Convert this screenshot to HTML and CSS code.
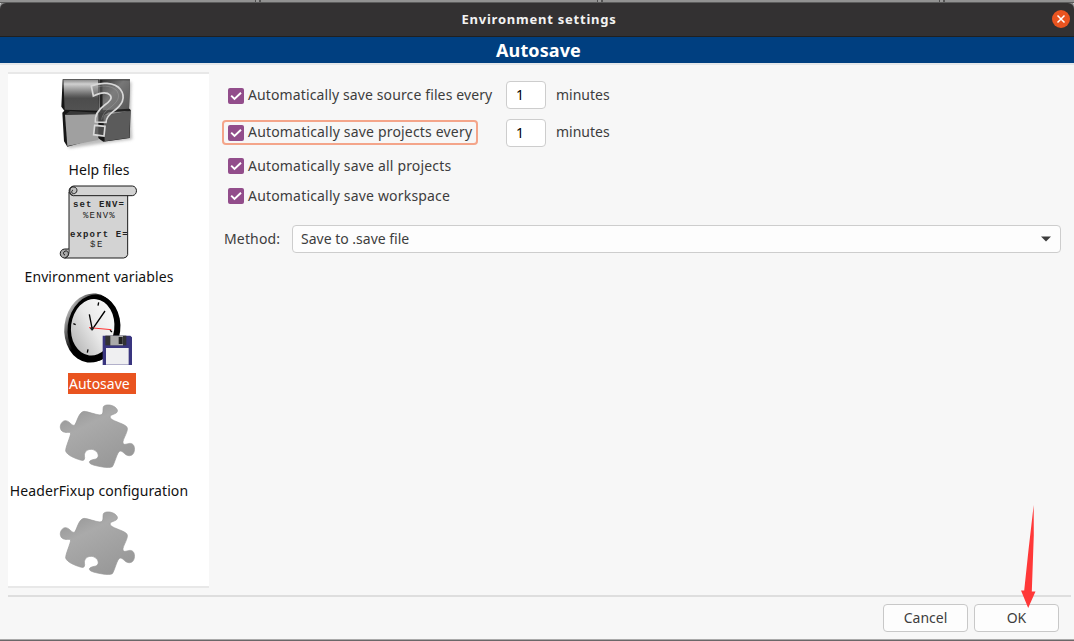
FILE: index.html
```html
<!DOCTYPE html>
<html lang="en">
<head>
<meta charset="utf-8">
<title>Environment settings</title>
<link rel="stylesheet" href="styles.css">
</head>
<body>
<svg class="defs" width="0" height="0" aria-hidden="true">
  <defs>
    <linearGradient id="puzzle-fill" x1="0" y1="0" x2="0.6" y2="1"><stop offset="0" stop-color="#8f8f8f"/><stop offset="0.4" stop-color="#aaa"/><stop offset="1" stop-color="#999"/></linearGradient>
    <symbol id="puzzle" viewBox="27 -11 240 255">
      <path d="M102 38C113 38 135 48 150 49C164 48 156 31 161 23C170 14 197 20 202 34C205 48 181 45 180 55C180 66 219 73 230 84C239 94 217 121 219 133C222 143 234 131 245 135C257 139 256 165 244 170C226 176 221 156 210 157C202 158 194 195 187 204C180 210 135 203 121 195C112 187 126 183 138 181C151 175 144 155 126 152C106 151 101 165 104 177C103 185 101 187 91 184C75 179 51 170 47 157C46 146 62 113 62 103C59 98 45 105 37 98C25 89 32 68 45 66C58 65 64 82 73 80C80 75 85 40 102 38Z" fill="url(#puzzle-fill)" stroke="#999" stroke-width="2"/>
    </symbol>
    <symbol id="tick" viewBox="0 0 16 16"><path d="M3.2 7.6L6.5 11L13 4.7" fill="none" stroke="#fff" stroke-width="1.9"/></symbol>
  </defs>
</svg>
<div class="window">
  <div class="backdrop-top"></div>
  <header class="titlebar">
    <h1 class="title">Environment settings</h1>
    <button class="close" aria-label="Close"><svg width="10" height="10" viewBox="0 0 10 10"><path d="M1.5 1.5L8.5 8.5M8.5 1.5L1.5 8.5" stroke="#fff" stroke-width="1.5"/></svg></button>
  </header>
  <div class="banner"><h2 class="banner-text">Autosave</h2></div>
  <main class="content">
    <nav class="sidebar">
      <div class="item">
        <svg class="icon" viewBox="27 12 240 255">
          <defs>
            <linearGradient id="box-a" x1="0" y1="0" x2="0" y2="1"><stop offset="0" stop-color="#8a8a8a"/><stop offset="0.14" stop-color="#d0d0d0"/><stop offset="0.5" stop-color="#646464"/><stop offset="0.6" stop-color="#4c4c4c"/><stop offset="1" stop-color="#525252"/></linearGradient>
            <linearGradient id="box-b" x1="0" y1="0" x2="1" y2="1"><stop offset="0" stop-color="#333"/><stop offset="0.4" stop-color="#777"/><stop offset="1" stop-color="#555"/></linearGradient>
            <filter id="soft" x="-20%" y="-20%" width="140%" height="140%"><feGaussianBlur stdDeviation="4"/></filter>
          </defs>
          <path d="M42 36L244 36L242 124L247 208L170 218L56 235Z" fill="#999" opacity="0.65" filter="url(#soft)"/>
          <path d="M38 28L148 28V116L150 128L238 116L242 120L239 204L160 215L144 204L52 230L42 214L37 128L43 122L34 110Z" fill="#161616"/>
          <path d="M148 28H240L237 116L242 122L150 130Z" fill="#222"/>
          <path d="M40 29L145 29L147 122L44 119Z" fill="url(#box-a)"/>
          <path d="M157 30L240 31L237 116L158 121Z" fill="url(#box-b)"/>
          <path d="M45 134L145 131L145 210L52 228Z" fill="#a0a0a0"/>
          <path d="M45 134L60 123L147 128L145 133Z" fill="#383838"/>
          <path d="M160 137L241 123L238 203L164 214Z" fill="#5b5b5b"/>
          <path d="M160 137L176 127L241 123Z" fill="#858585"/>
          <path d="M124 48C150 36 195 36 211 58C230 84 215 106 190 124C176 134 169 142 168 157L136 156C134 134 145 119 164 105C181 93 188 84 180 75C169 64 149 69 130 78Z" fill="#888" fill-opacity="0.4" stroke="#d8d8d8" stroke-width="5"/>
          <path d="M138 52C162 44 192 49 202 65C211 82 202 95 185 109C168 122 158 130 155 149" fill="none" stroke="#aaa" stroke-width="2" opacity="0.6"/>
          <path d="M134 166L165 169L162 198L131 194Z" fill="#555" fill-opacity="0.8" stroke="#d8d8d8" stroke-width="5"/>
        </svg>
        <span class="label">Help files</span>
      </div>
      <div class="item">
        <svg class="icon" viewBox="27 9 240 255">
          <g fill="#d3d3d3" stroke="#1b1b1b" stroke-width="3">
            <path d="M57 42H233V230Q231 239 221 240H44Q57 237 57 219Z"/>
            <path d="M71 24H247C263 25 264 51 247 53H70C53 51 53 26 71 24Z"/>
            <path d="M70 53C57 49 56 31 67 27C82 24 86 43 73 47C65 48 62 40 69 36" fill="#bdbdbd"/>
            <path d="M57 213H44C27 214 26 238 43 240C56 238 59 223 50 219C40 218 37 229 45 231" fill="#aaa"/>
          </g>
          <g class="scroll-text">
            <text x="69" y="86" textLength="153" font-weight="bold">set ENV=</text>
            <text x="99" y="119" textLength="95">%ENV%</text>
            <text x="60" y="176" textLength="173" font-weight="bold">export E=</text>
            <text x="120" y="208" textLength="37">$E</text>
          </g>
        </svg>
        <span class="label wide">Environment variables</span>
      </div>
      <div class="item">
        <svg class="icon" viewBox="27 5 240 255">
          <defs>
            <linearGradient id="rim" x1="0" y1="0.2" x2="0.7" y2="0.6"><stop offset="0" stop-color="#ddd"/><stop offset="0.25" stop-color="#777"/><stop offset="0.6" stop-color="#000"/></linearGradient>
            <linearGradient id="face" x1="1" y1="0" x2="0" y2="1"><stop offset="0" stop-color="#fff"/><stop offset="0.5" stop-color="#e8e8e8"/><stop offset="1" stop-color="#aaa"/></linearGradient>
          </defs>
          <ellipse cx="125" cy="125" rx="82" ry="104" transform="rotate(7 125 125)" fill="url(#rim)"/>
          <ellipse cx="132" cy="126" rx="79" ry="101" transform="rotate(7 132 126)" fill="#000"/>
          <ellipse cx="128" cy="123" rx="65" ry="85" transform="rotate(7 128 123)" fill="url(#face)"/>
          <path d="M127 130L118 84M125 132L165 74" stroke="#000" stroke-width="4"/>
          <path d="M146 48L144 58M70 112L77 115M114 189L112 199M180 132L186 137" stroke="#000" stroke-width="4"/>
          <path d="M117 124L184 130" stroke="#f33" stroke-width="3"/>
          <circle cx="126" cy="126" r="5" fill="#222"/>
          <path d="M158 148H241L246 153V236H158Z" fill="#39357f"/>
          <path d="M166 148H229V177H166Z" fill="#333"/>
          <path d="M181 148H219V177H181Z" fill="#aaa"/>
          <path d="M206 152H218V173H206Z" fill="#222"/>
          <path d="M168 185H236V235H168Z" fill="#efeff1"/>
        </svg>
        <span class="label selected">Autosave</span>
      </div>
      <div class="item">
        <svg class="icon"><use href="#puzzle"/></svg>
        <span class="label wide">HeaderFixup configuration</span>
      </div>
      <div class="item"><svg class="icon"><use href="#puzzle"/></svg></div>
    </nav>
    <section class="form">
      <div class="row timed">
        <label class="check first"><span class="box"><svg width="16" height="16"><use href="#tick"/></svg></span><span class="text">Automatically save source files every</span></label>
        <span class="num raised">1</span><span class="unit">minutes</span>
      </div>
      <div class="row timed second">
        <label class="check focused"><span class="box"><svg width="16" height="16"><use href="#tick"/></svg></span><span class="text">Automatically save projects every</span></label>
        <span class="num">1</span><span class="unit">minutes</span>
      </div>
      <div class="row plain">
        <label class="check"><span class="box"><svg width="16" height="16"><use href="#tick"/></svg></span><span>Automatically save all projects</span></label>
      </div>
      <div class="row plain">
        <label class="check"><span class="box"><svg width="16" height="16"><use href="#tick"/></svg></span><span>Automatically save workspace</span></label>
      </div>
      <div class="row method">
        <span class="method-label">Method:</span>
        <div class="select"><span>Save to .save file</span><svg width="10" height="6" viewBox="0 0 10 6"><path d="M0 0.5H10L5 5.5Z" fill="#3d3d3d"/></svg></div>
      </div>
    </section>
  </main>
  <footer class="footer">
    <button class="btn">Cancel</button>
    <button class="btn">OK</button>
  </footer>
  <div class="backdrop-bottom"></div>
  <svg class="arrow" width="16" height="104" viewBox="0 0 16 104"><path d="M13.7 0L13.8 30L11.8 86.5H15.5L8.2 103L1 85.5H4.2L8.5 45Z" fill="#ff3838"/></svg>
</div>
</body>
</html>
```
FILE: styles.css
```css
* { box-sizing: border-box; }
body { margin: 0; background: #f7f7f7; font: 14px/20px "Noto Sans", "Open Sans", sans-serif; color: #3d3d3d; overflow: hidden; }
.defs { position: absolute; }
button { font: inherit; color: inherit; padding: 0; }
.window { position: relative; width: 1074px; height: 641px; display: flex; flex-direction: column; background: #f7f7f7; }
.backdrop-top { position: relative; z-index: 1; height: 3px; flex: none; background: linear-gradient(90deg, #505050 0 1px, #999 1px 4px, #555 4px 6px, transparent 6px) 255px 0 / 342px 2px repeat-x, linear-gradient(#929292 0 2px, #5c5c5c 2px); }
.titlebar { height: 34px; flex: none; display: grid; grid-template-columns: 24px 1fr 24px; align-items: center; background: #333132; border-bottom: 1px solid #202020; border-radius: 6px 6px 0 0; padding: 0 4px 0 8px; box-shadow: 0 -3px #858585; }
.title { grid-column: 2; margin: -1px 0 0; font-size: 13px; line-height: 20px; font-weight: 700; letter-spacing: .77px; text-align: center; color: #f3f3f3; }
.close { width: 18px; height: 18px; margin-top: -1px; border: 0; border-radius: 50%; background: #e95420; display: grid; place-items: center; justify-self: end; }
.banner { height: 28px; flex: none; background: #003f80; border-bottom: 2px solid #e5e7e9; }
.banner-text { margin: 0; padding-left: 3px; font-size: 18px; line-height: 26px; font-weight: 700; color: #fff; text-align: center; letter-spacing: .1px; }
.content { height: 530px; flex: none; display: flex; padding: 7px 13px 0 8px; }
.sidebar { width: 201px; height: 516px; flex: none; overflow: hidden; background: #fff; border-top: 2px solid #e8e8e8; border-bottom: 2px solid #e8e8e8; }
.item { width: 182px; height: 107px; display: flex; flex-direction: column; align-items: center; color: #111; }
.icon { display: block; width: 80px; height: 85px; flex: none; }
.label { line-height: 21px; white-space: nowrap; }
.wide { letter-spacing: .08px; }
.selected { width: 68px; margin-left: 6px; padding-left: 1px; background: #e95420; color: #fff; }
.scroll-text { font: 27px "Liberation Mono", monospace; fill: #222; }
.form { flex: 1; margin-left: 13px; padding-top: 8px; }
.row { display: flex; align-items: center; white-space: nowrap; }
.timed { height: 31px; }
.second { margin-top: 6px; margin-bottom: 3px; }
.plain { height: 30px; }
.check { height: 25px; display: flex; align-items: center; gap: 4px; padding-left: 4px; border: 2px solid transparent; border-radius: 4px; width: 256px; letter-spacing: .18px; }
.first { letter-spacing: .12px; }
.text { margin-top: -1px; }
.focused { border-color: #f4a58a; }
.box { width: 16px; height: 16px; border-radius: 2px; background: #924d8b; display: flex; }
.num { width: 40px; height: 28px; margin-left: 28px; padding-left: 9px; line-height: 26px; border: 1px solid #cdcdcd; border-radius: 4px; background: #fff; color: #000; }
.raised { margin-top: -1px; }
.unit { margin: -1px 0 0 10px; }
.method { margin-top: 14px; padding-left: 2px; }
.method-label { width: 68px; letter-spacing: .15px; }
.select { flex: 1; height: 28px; display: flex; align-items: center; justify-content: space-between; padding: 0 9px 0 8px; border: 1px solid #cdcdcd; border-radius: 4px; background: #fdfdfd; }
.footer { height: 44px; flex: none; display: flex; justify-content: flex-end; gap: 6px; margin: 0 3px 0 8px; padding: 7px 12px 0 0; border-top: 2px solid #dedede; }
.btn { width: 85px; height: 28px; border: 1px solid #c8c8c8; border-radius: 4px; background: #fdfdfd; }
.backdrop-bottom { height: 2px; flex: none; background: linear-gradient(#aaa 0 1px, #6a6768 1px); }
.arrow { position: absolute; left: 1020px; top: 505px; }
```
